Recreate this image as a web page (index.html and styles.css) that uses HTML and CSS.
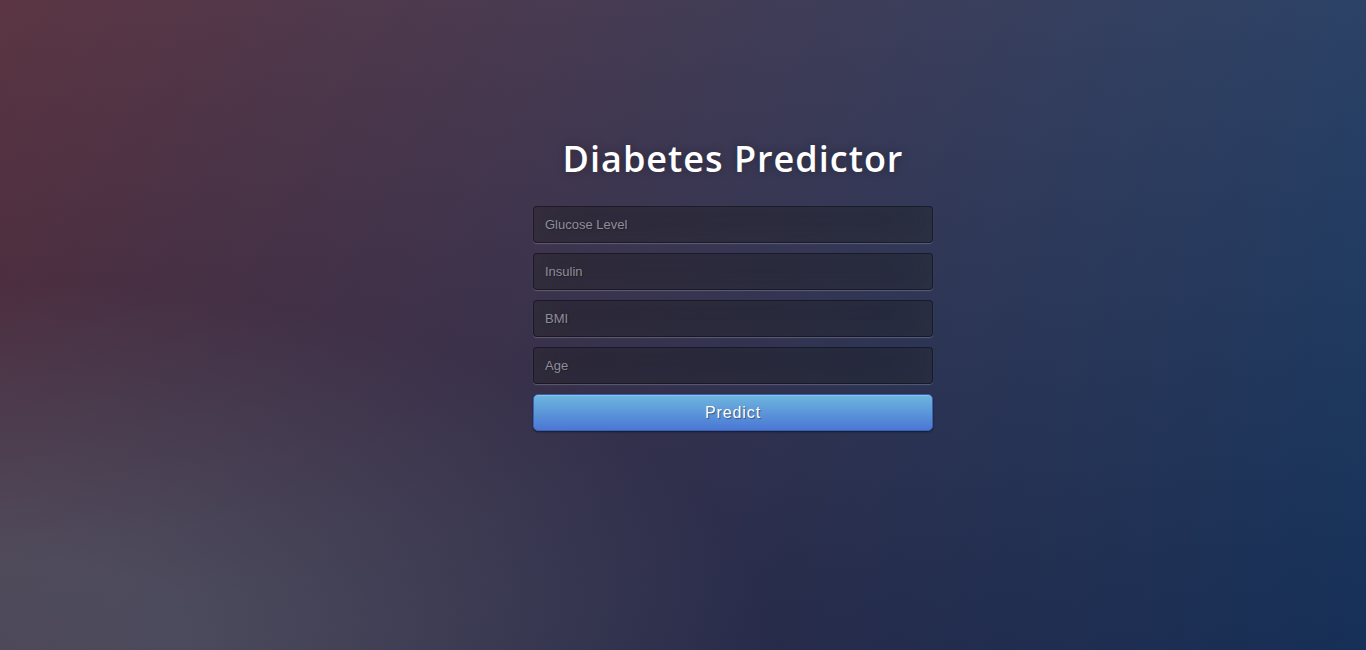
FILE: index.html
```html
<!DOCTYPE html>
<html lang="en">
<head>
<meta charset="utf-8">
<title>Diabetes Predictor</title>
<link rel="stylesheet" href="styles.css">
</head>
<body>
<div class="login">
  <h1 class="title">Diabetes Predictor</h1>
  <form class="form">
    <input class="field" type="text" placeholder="Glucose Level">
    <input class="field" type="text" placeholder="Insulin">
    <input class="field" type="text" placeholder="BMI">
    <input class="field" type="text" placeholder="Age">
    <button class="btn" type="button">Predict</button>
  </form>
</div>
</body>
</html>
```

FILE: styles.css
```css
html {
  width: 100%;
  height: 100%;
  overflow: hidden;
}
body {
  margin: 0;
  width: 100%;
  height: 100%;
  font-family: "Open Sans", sans-serif;
  background: #092756;
  background:
    radial-gradient(ellipse farthest-corner at 0% 100%, rgba(104,128,138,.4) 10%, rgba(138,114,76,0) 40%),
    linear-gradient(to bottom, rgba(57,173,219,.25) 0%, rgba(42,60,87,.4) 100%),
    linear-gradient(135deg, #670d10 0%, #092756 100%);
}
.login {
  width: 400px;
  margin-left: calc(50% - 150px);
  padding-top: 134px;
}
.title {
  margin: 0 0 23px;
  font-size: 36px;
  font-weight: 600;
  line-height: 49px;
  color: #fff;
  letter-spacing: 1px;
  text-align: center;
  text-shadow: 0 0 10px rgba(0,0,0,0.3);
}
.form {
  display: flex;
  flex-direction: column;
  gap: 10px;
}
.field {
  box-sizing: border-box;
  width: 100%;
  height: 37px;
  margin: 0;
  padding: 10px 11px;
  font-family: "Liberation Sans", Arial, sans-serif;
  font-size: 13px;
  color: #fff;
  background: rgba(0,0,0,0.3);
  border: 1px solid rgba(0,0,0,0.3);
  border-radius: 4px;
  outline: none;
  text-shadow: 1px 1px 1px rgba(0,0,0,0.3);
  box-shadow: inset 0 -5px 45px rgba(100,100,100,0.2), 0 1px 1px rgba(255,255,255,0.2);
}
.field::placeholder {
  color: #8e8e9a;
}
.btn {
  box-sizing: border-box;
  width: 100%;
  height: 37px;
  margin: 0;
  padding: 0 14px;
  font-family: "Liberation Sans", Arial, sans-serif;
  font-size: 16px;
  color: #fff;
  letter-spacing: 0.9px;
  background-color: #4a77d4;
  background-image: linear-gradient(to bottom, #6eb6de, #4a77d4);
  border: 1px solid #3762bc;
  border-radius: 5px;
  text-shadow: 1px 1px 1px rgba(0,0,0,0.4);
  box-shadow: inset 0 1px 0 rgba(255,255,255,0.2), 0 1px 2px rgba(0,0,0,0.5);
  cursor: pointer;
}
```
